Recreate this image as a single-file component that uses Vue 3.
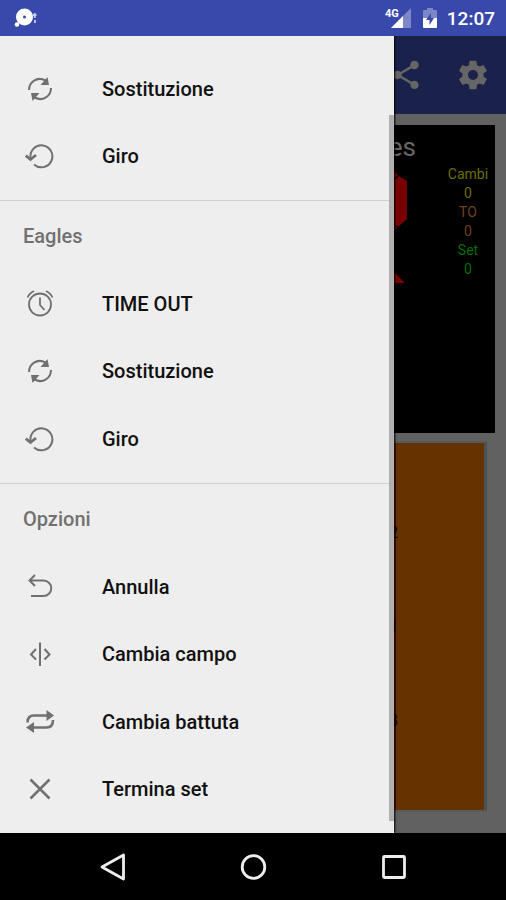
<script setup>
const groups = [
  {
    title: '',
    items: [
      { label: 'Sostituzione', icon: 'swap' },
      { label: 'Giro', icon: 'rotate' }
    ]
  },
  {
    title: 'Eagles',
    items: [
      { label: 'TIME OUT', icon: 'alarm' },
      { label: 'Sostituzione', icon: 'swap' },
      { label: 'Giro', icon: 'rotate' }
    ]
  },
  {
    title: 'Opzioni',
    items: [
      { label: 'Annulla', icon: 'undo' },
      { label: 'Cambia campo', icon: 'sides' },
      { label: 'Cambia battuta', icon: 'repeat' },
      { label: 'Termina set', icon: 'close' }
    ]
  }
]

const stats = [
  { label: 'Cambi', value: 0, tone: 'yellow' },
  { label: 'TO', value: 0, tone: 'copper' },
  { label: 'Set', value: 0, tone: 'green' }
]

const players = [2, 1, 3]
</script>

<template>
  <div class="screen">
    <header class="status">
      <svg class="notice" viewBox="0 0 24 20" aria-hidden="true">
        <circle cx="10.500" cy="9" r="8.500" fill="#fff" />
        <circle cx="10.500" cy="9" r="1.500" fill="#3949ab" />
        <circle cx="3" cy="16.500" r="2.300" fill="#fff" />
        <path d="M19 7h3.500M20.800 5v5M21 12v3" stroke="#c5cae9" stroke-width="1.800" fill="none" />
      </svg>
      <div class="indicators">
        <div class="signal">
          <span class="network">4G</span>
          <svg viewBox="0 0 20 20" aria-hidden="true">
            <path d="M0 20 20 0V20Z" fill="#7e88c8" />
            <path d="M0 20 12 8V20Z" fill="#fff" />
          </svg>
        </div>
        <svg class="battery" viewBox="0 0 14 20" aria-hidden="true">
          <path d="M4 0h6v2h3q1 0 1 1v7H0V3q0-1 1-1h3Z" fill="#7e88c8" />
          <path d="M0 10h14v9q0 1-1 1H1q-1 0-1-1Z" fill="#fff" />
          <path d="M8 5 3 12h3.500v5L11 10H8Z" fill="#3949ab" />
        </svg>
        <time class="clock">12:07</time>
      </div>
    </header>

    <main class="stage">
      <div class="match">
        <div class="toolbar">
          <button type="button" aria-label="Condividi">
            <svg viewBox="0 0 24 24" class="share"><path d="M18 16.080c-.76 0-1.440.3-1.960.770L8.910 12.700c.05-.23.09-.46.09-.7s-.04-.47-.09-.7l7.050-4.110c.54.5 1.250.81 2.040.81 1.660 0 3-1.340 3-3s-1.340-3-3-3-3 1.340-3 3c0 .24.04.47.09.7L8.040 9.810C7.500 9.310 6.790 9 6 9c-1.660 0-3 1.340-3 3s1.340 3 3 3c.79 0 1.500-.31 2.040-.81l7.120 4.160c-.05.21-.08.43-.08.65 0 1.610 1.310 2.920 2.920 2.920s2.920-1.310 2.920-2.920-1.310-2.920-2.920-2.920z" /></svg>
          </button>
          <button type="button" aria-label="Impostazioni">
            <svg viewBox="0 0 24 24"><path d="M19.430 12.980c.04-.32.07-.64.07-.98s-.03-.66-.07-.98l2.110-1.650c.19-.15.24-.42.12-.64l-2-3.460c-.12-.22-.39-.3-.61-.22l-2.490 1c-.52-.4-1.080-.73-1.690-.98l-.38-2.650C14.460 2.180 14.250 2 14 2h-4c-.25 0-.46.18-.49.42l-.38 2.650c-.61.25-1.170.59-1.690.98l-2.490-1c-.23-.09-.49 0-.61.22l-2 3.460c-.13.22-.07.49.12.64l2.110 1.650c-.04.32-.07.65-.07.98s.03.66.07.98l-2.110 1.650c-.19.15-.24.42-.12.64l2 3.460c.12.22.39.3.61.22l2.490-1c.52.4 1.080.73 1.690.98l.38 2.650c.03.24.24.42.49.42h4c.25 0 .46-.18.49-.42l.38-2.650c.61-.25 1.170-.59 1.690-.98l2.490 1c.23.09.49 0 .61-.22l2-3.460c.12-.22.07-.49-.12-.64l-2.110-1.650zM12 15.500c-1.930 0-3.500-1.570-3.500-3.500s1.570-3.500 3.500-3.500 3.500 1.570 3.500 3.500-1.570 3.500-3.500 3.500z" /></svg>
          </button>
        </div>

        <div class="boards">
          <section class="score">
            <div class="team">
              <h2>Eagles</h2>
              <svg viewBox="0 0 70 116" class="digit" aria-hidden="true">
                <path d="M8 0H56L61 5 55 10H16L4 4Z" />
                <path d="M62 6 70 11V49L61 57 55 52V12Z" />
                <path d="M16 48H52L60 58 55 64H16Z" />
                <path d="M16 102H57L68 113H4Z" />
              </svg>
            </div>
            <dl class="stats">
              <div v-for="s in stats" :key="s.label" :class="s.tone">
                <dt>{{ s.label }}</dt>
                <dd>{{ s.value }}</dd>
              </div>
            </dl>
          </section>
          <section class="court">
            <div class="front">
              <span v-for="p in players" :key="p">{{ p }}</span>
            </div>
            <div class="back"></div>
          </section>
        </div>
      </div>

      <nav class="drawer">
        <template v-for="(g, i) in groups" :key="i">
          <h3 v-if="g.title">{{ g.title }}</h3>
          <button v-for="item in g.items" :key="item.label" type="button" class="item">
            <svg viewBox="0 0 30 30" aria-hidden="true">
              <g v-if="item.icon === 'swap'">
                <path d="M4 16C4 8 12 2 20.500 6.500M26 14C26 22 18 28 9.500 23.500" />
                <path class="solid" d="M22.500 3 24 11H15.500ZM7.500 27 6 19H14.500Z" />
              </g>
              <g v-else-if="item.icon === 'rotate'">
                <path d="M5.500 17A11 11 0 1 1 9 23.500" />
                <path d="M.8 14.500 5.500 18.500 11 14" stroke-width="2.800" />
              </g>
              <g v-else-if="item.icon === 'alarm'" class="thin">
                <circle cx="15" cy="15.500" r="11" />
                <path d="M15 8.500V16L19.500 21M2.500 8.500Q4 4.500 9 2M27.500 8.500Q26 4.500 21 2" />
              </g>
              <g v-else-if="item.icon === 'undo'">
                <path d="M4.500 8.500H18.500A7.500 7.500 0 0 1 18.500 24H6M10 3 4.500 8.500 10 14" />
              </g>
              <g v-else-if="item.icon === 'sides'">
                <path d="M15 3.500V27M11 10 6 15.500 11 20.500M19.500 10 24.500 15.500 19.500 20.500" />
              </g>
              <g v-else-if="item.icon === 'repeat'">
                <path d="M2.500 15.500Q2.500 8.500 9 8.500H23M28 13Q28 20.500 21.500 20.500H8" stroke-width="2.600" />
                <path class="solid" d="M21.500 3 29 8.500 21.500 14ZM9 15 1 20.500 9 26Z" />
              </g>
              <g v-else>
                <path d="M5.500 5.500 24.500 24.500M24.500 5.500 5.500 24.500" stroke-width="2.500" />
              </g>
            </svg>
            <span>{{ item.label }}</span>
          </button>
          <hr v-if="i < groups.length - 1" />
        </template>
        <div class="scrollbar"></div>
      </nav>
    </main>

    <footer class="keys">
      <button type="button" aria-label="Indietro">
        <svg viewBox="0 0 30 30"><path d="M4 15 25.500 3V27Z" /></svg>
      </button>
      <button type="button" aria-label="Home">
        <svg viewBox="0 0 30 30"><circle cx="15.500" cy="15" r="11.300" /></svg>
      </button>
      <button type="button" aria-label="Recenti">
        <svg viewBox="0 0 30 30"><rect x="5.500" y="4.500" width="21" height="21" rx="1" /></svg>
      </button>
    </footer>
  </div>
</template>

<style>
body {
  margin: 0;
  background: #000;
}
</style>

<style scoped>
.screen {
  display: flex;
  flex-direction: column;
  min-height: 100vh;
  font-family: Roboto, "Liberation Sans", sans-serif;
}
button {
  border: 0;
  padding: 0;
  background: none;
  font: inherit;
  color: inherit;
}
.status {
  display: flex;
  align-items: center;
  justify-content: space-between;
  height: 36px;
  padding: 0 11px 0 14px;
  background: #3949ab;
  color: #fff;
}
.notice {
  width: 24px;
  height: 20px;
}
.indicators {
  display: flex;
  align-items: center;
}
.signal {
  display: flex;
  align-items: flex-start;
}
.signal svg {
  width: 20px;
  height: 20px;
  margin-left: -8px;
}
.network {
  font-size: 11px;
  line-height: 11px;
  font-weight: 700;
}
.battery {
  width: 14px;
  height: 20px;
  margin: 0 10px 0 12px;
}
.clock {
  padding-top: 2px;
  font-size: 19px;
  line-height: 34px;
  font-weight: 500;
}
.stage {
  position: relative;
  display: flex;
  flex: 1;
}
.match {
  display: flex;
  flex: 1;
  flex-direction: column;
  background: #616161;
}
.toolbar {
  display: flex;
  align-items: center;
  justify-content: flex-end;
  gap: 33px;
  height: 78px;
  padding: 0 16px;
  background: #1a214b;
}
.toolbar svg {
  display: block;
  width: 34px;
  height: 34px;
  fill: #666;
}
.boards {
  display: flex;
  flex: 1;
  flex-direction: column;
  gap: 8px;
  padding: 11px 11px 21px;
}
.score {
  display: flex;
  justify-content: flex-end;
  height: 308px;
  background: #000;
}
.team {
  display: flex;
  flex-direction: column;
  align-items: flex-end;
}
.team h2 {
  margin: 0;
  padding: 5px 0 6px;
  font-size: 26px;
  line-height: 34px;
  font-weight: 400;
  color: #666;
}
.digit {
  width: 70px;
  height: 116px;
  margin-right: 9px;
  fill: #7a0000;
}
.stats {
  width: 54px;
  margin: 40px 0 0 25px;
  font-size: 14px;
  line-height: 19px;
  text-align: center;
}
.stats dd {
  margin: 0;
}
.yellow {
  color: #6e6e00;
}
.copper {
  color: #70401f;
}
.green {
  color: #006e00;
}
.court {
  display: flex;
  flex: 1;
  margin-right: 8px;
  border-style: solid;
  border-width: 2px 3px 2px 1px;
  border-color: #585a5b #4c5152 #585a5b #585a5b;
  background: #663300;
}
.front {
  display: flex;
  flex: 1;
  flex-direction: column;
  justify-content: space-around;
  align-items: flex-end;
  padding: 42px 0;
  border-right: 1px solid #660000;
  font-size: 16px;
  color: #000;
}
.front span {
  margin-right: -3px;
}
.back {
  width: 88px;
}
.drawer {
  position: absolute;
  top: 0;
  bottom: 0;
  left: 0;
  display: flex;
  flex-direction: column;
  width: calc(100% - 112px);
  box-sizing: border-box;
  padding: 19px 0 10px;
  background: #eee;
  box-shadow: 1px 0 2px #000;
  clip-path: inset(0 -8px 0 0);
}
.drawer h3 {
  margin: 0;
  padding: 1px 0 0 23px;
  font-size: 20px;
  line-height: 68px;
  font-weight: 500;
  color: #717171;
}
.drawer hr {
  width: 100%;
  height: 1px;
  margin: 10px 0 0;
  border: 0;
  background: #d0d0d0;
}
.item {
  display: flex;
  flex: 1;
  align-items: center;
  gap: 47px;
  padding-left: 25px;
  font-size: 20px;
  line-height: 24px;
  font-weight: 500;
  text-align: left;
  color: #111;
}
.item svg {
  width: 30px;
  height: 30px;
  fill: none;
  stroke: #707070;
  stroke-width: 2;
}
.item .thin {
  stroke-width: 1.800;
}
.item .solid {
  fill: #707070;
  stroke: none;
}
.scrollbar {
  position: absolute;
  top: 79px;
  right: 0;
  bottom: 12px;
  width: 5px;
  background: #b0b0b0;
}
.keys {
  display: flex;
  justify-content: center;
  height: 67px;
  background: #000;
}
.keys button {
  display: flex;
  align-items: center;
  justify-content: center;
  width: 140px;
}
.keys svg {
  width: 30px;
  height: 30px;
  fill: none;
  stroke: #eee;
  stroke-width: 2.800;
  stroke-linejoin: round;
}
</style>
